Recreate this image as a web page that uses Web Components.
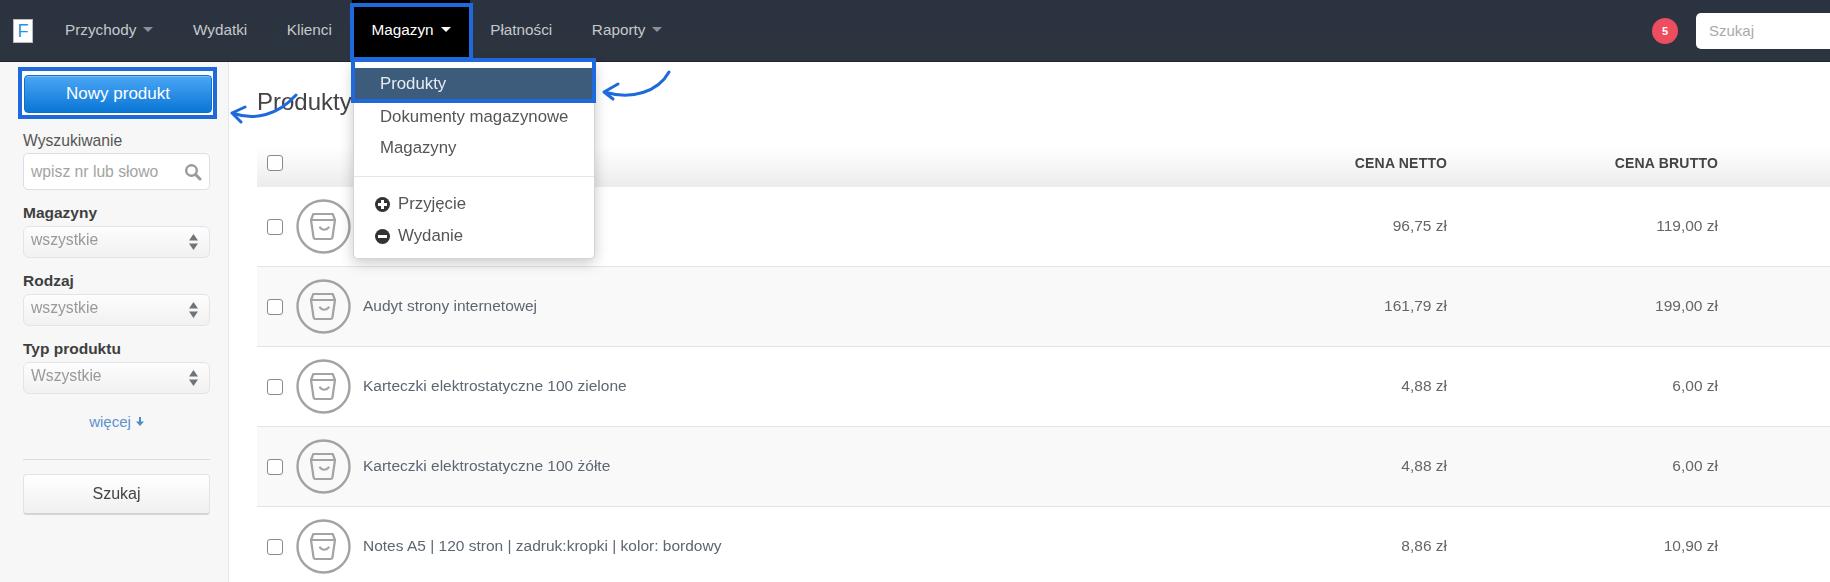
<!DOCTYPE html>
<html lang="pl"><head><meta charset="utf-8"><title>Produkty</title>
<style>
html,body{margin:0;height:582px;overflow:hidden;background:#fff;font:15.5px "Liberation Sans",Arial,sans-serif;color:#555}
app-shell{width:1830px;height:582px;filter:blur(.35px)}
</style></head><body>
<app-shell>
  <app-navbar slot="nav">
    <nav-item caret>Przychody</nav-item>
    <nav-item>Wydatki</nav-item>
    <nav-item>Klienci</nav-item>
    <nav-item caret active>Magazyn</nav-item>
    <nav-item>Płatności</nav-item>
    <nav-item caret>Raporty</nav-item>
  </app-navbar>
  <app-sidebar slot="side">
    <filter-select label="Magazyny" value="wszystkie"></filter-select>
    <filter-select label="Rodzaj" value="wszystkie"></filter-select>
    <filter-select label="Typ produktu" value="Wszystkie"></filter-select>
  </app-sidebar>
  <product-table slot="main">
    <product-row name="" net="96,75 zł" gross="119,00 zł"></product-row>
    <product-row alt name="Audyt strony internetowej" net="161,79 zł" gross="199,00 zł"></product-row>
    <product-row name="Karteczki elektrostatyczne 100 zielone" net="4,88 zł" gross="6,00 zł"></product-row>
    <product-row alt name="Karteczki elektrostatyczne 100 żółte" net="4,88 zł" gross="6,00 zł"></product-row>
    <product-row name="Notes A5 | 120 stron | zadruk:kropki | kolor: bordowy" net="8,86 zł" gross="10,90 zł"></product-row>
  </product-table>
  <dropdown-menu slot="over"></dropdown-menu>
  <call-outs slot="over"></call-outs>
</app-shell>
<script>
const def=(n,html)=>{customElements.define(n,class extends HTMLElement{
  connectedCallback(){ if(this.shadowRoot)return; const r=this.attachShadow({mode:'open'}); r.innerHTML=typeof html==='function'?html(this):html; }
});};
def('app-shell',`<style>
:host{display:grid;grid-template-columns:229px 1fr;grid-template-rows:62px 520px;position:relative;overflow:hidden}
.n{grid-column:1/3;display:block}
</style>
<div class="n"><slot name="nav"></slot></div>
<slot name="side"></slot><slot name="main"></slot><slot name="over"></slot>`);

def('app-navbar',`<style>
:host{display:flex;align-items:center;height:62px;background:linear-gradient(#2a333f,#2c3440);box-sizing:border-box;border-bottom:1px solid #1f262e;padding-left:13px}
.logo{width:20px;height:24px;background:#fff;border:1px solid #bbb;box-sizing:border-box;display:flex;align-items:center;justify-content:center;color:#2f8fd8;font-size:18px;line-height:1;margin-right:12.2px;flex:none}
.items{display:flex;height:100%}
.right{margin-left:auto;display:flex;align-items:center}
.badge{width:26px;height:26px;border-radius:50%;background:#ec4d5f;color:#fff;font-size:11px;font-weight:700;display:flex;align-items:center;justify-content:center;margin-right:18px}
.search{width:134px;height:36px;background:#fff;border-radius:5px 0 0 5px;box-sizing:border-box;padding:0 13px;display:flex;align-items:center;color:#a9a9a9;font-size:15px}
</style><div class="logo">F</div><div class="items"><slot></slot></div>
<div class="right"><div class="badge">5</div><div class="search">Szukaj</div></div>`);

def('nav-item',el=>`<style>
:host{display:flex;align-items:center;color:#c6c8cb;font-size:15.3px;padding:0 19.8px 2px;white-space:nowrap;height:61px;box-sizing:border-box}
:host([active]){background:#000;color:#fff}
.c{width:0;height:0;border:5px solid transparent;border-top:5px solid #8b9096;border-bottom:0;margin-left:7px}
:host([active]) .c{border-top-color:#fff}
</style><slot></slot>${el.hasAttribute('caret')?'<i class="c"></i>':''}`);

def('app-sidebar',`<style>
:host{display:block;background:#f7f7f8;border-right:1px solid #e4e8ec;box-sizing:border-box;padding:13px 18px 0 23px;height:520px}
.new{height:38px;box-sizing:border-box;margin:0 -2px 0 1px;border:1px solid #0f70c8;border-radius:4px;background:linear-gradient(#4ba6f5,#0a76d6);color:#fff;font-size:17px;display:flex;align-items:center;justify-content:center;box-shadow:inset 0 1px 0 #7cc0f8,0 0 0 3px #fff}
.lab{margin-top:20px;font-size:15.7px;color:#555;line-height:16px;height:20px}
.inp{height:37px;box-sizing:border-box;border:1px solid #dcdfe3;border-radius:5px;background:#fff;display:flex;align-items:center;justify-content:space-between;padding:0 7px;color:#a3a3a3;font-size:15.7px}
.more{display:flex;justify-content:center;align-items:center;gap:5px;color:#5b93cc;font-size:15px;margin-top:19px;height:16px}
hr{border:0;border-top:1px solid #dcdcdc;margin:30px 0 14px}
.go{height:41px;box-sizing:border-box;border:1px solid #e3e3e3;border-bottom:2px solid #d4d4d4;border-radius:4px;background:linear-gradient(#fff,#f0f0f0);display:flex;align-items:center;justify-content:center;color:#444;font-size:16px}
svg{display:block}
</style>
<div class="new">Nowy produkt</div>
<div class="lab">Wyszukiwanie</div>
<div class="inp"><span>wpisz nr lub słowo</span><svg width="18" height="18" viewBox="0 0 18 18" fill="none" stroke="#9a9a9a" stroke-width="2.4"><circle cx="7.5" cy="7.5" r="5.3"/><path d="M11.5 11.5 16 16" stroke-linecap="round" stroke-width="3"/></svg></div>
<slot></slot>
<div class="more"><span>więcej</span><svg width="8" height="9" viewBox="0 0 8 9"><path d="M3 0h2v4.5h3L4 9 0 4.5h3z" fill="#4f8bc9"/></svg></div>
<hr>
<div class="go">Szukaj</div>`);

def('filter-select',el=>`<style>
:host{display:block;margin-top:16px}
.l{font-weight:700;color:#3f3f3f;font-size:15.5px;line-height:14px;height:20px}
.s{height:32px;box-sizing:border-box;border:1px solid #dde6ee;border-radius:6px;background:linear-gradient(#fdfdfd,#f1f1f1);padding:0 7px;display:flex;align-items:center;justify-content:space-between;color:#999;font-size:15.7px}
span{position:relative;top:-2px}
svg{display:block;margin-right:4px}
</style><div class="l">${el.getAttribute('label')}</div>
<div class="s"><span>${el.getAttribute('value')}</span><svg width="9" height="16" viewBox="0 0 9 16" fill="#6f7478"><path d="M4.5 0 9 6.5H0zM0 9.5h9L4.5 16z"/></svg></div>`);

def('product-table',`<style>
:host{display:block;padding:25px 0 0 28px;overflow:hidden;height:520px;box-sizing:border-box}
h1{margin:0;font-weight:400;font-size:24px;line-height:30px;color:#444;height:60px}
.h{display:grid;grid-template-columns:1000px 190px 271px 1fr;height:40px;box-sizing:border-box;padding-bottom:8px;align-items:center;background:linear-gradient(#fff,#ececec);font-weight:700;font-size:14px;color:#444;letter-spacing:.2px}
.h>div{text-align:right}.h>div:first-child{text-align:left;padding-left:10px;display:flex}
.cb{width:16px;height:16px;box-sizing:border-box;border:1.5px solid #8a8a8a;border-radius:3px;background:#fff}
</style>
<h1>Produkty</h1>
<div class="h"><div><i class="cb"></i></div><div>CENA NETTO</div><div>CENA BRUTTO</div><div></div></div>
<slot></slot>`);

def('product-row',el=>`<style>
:host{display:grid;grid-template-columns:1000px 190px 271px 1fr;height:80px;align-items:center;background:#fff;border-bottom:1px solid #e4e4e4;box-sizing:border-box;color:#666;font-size:15.5px}
:host([alt]){background:#f9f9f9}
.a{display:flex;align-items:center;padding-left:10px}
.cb{width:16px;height:16px;box-sizing:border-box;border:1.5px solid #8a8a8a;border-radius:3px;background:#fff;flex:none;margin-right:13px}
svg{display:block;flex:none;margin-right:12px}
.n{color:#5d6673;position:relative;top:-1px}
.r{text-align:right;position:relative;top:-1px}
</style>
<div class="a"><i class="cb"></i><svg width="55" height="55" viewBox="0 0 55 55" fill="none" stroke="#a3a3a3"><circle cx="27.5" cy="27.5" r="26" stroke-width="2.4"/><path d="M15 21 17.3 15H36.7L39 21M15 21H39L36.5 38Q36.3 40 34.5 40H19.5Q17.7 40 17.5 38ZM24 28.5Q28 33 32.7 28.5" stroke-width="2.2" stroke-linejoin="round" stroke-linecap="round"/></svg><span class="n">${el.getAttribute('name')}</span></div>
<div class="r">${el.getAttribute('net')}</div><div class="r">${el.getAttribute('gross')}</div><div></div>`);

def('dropdown-menu',`<style>
:host{position:absolute;left:353px;top:62px;width:242px;height:197px;background:#fff;border:1px solid #d4d4d4;border-top:0;border-radius:0 0 5px 5px;box-sizing:border-box;box-shadow:0 4px 14px rgba(0,0,0,.22);font-size:16.8px;color:#555;padding-top:6px}
.i{height:31px;display:flex;align-items:center;padding-left:26px}
.i.on{background:#3d5c7c;color:#e8edf2;height:33px;padding-bottom:2px;box-sizing:border-box}
.d{border-top:1px solid #e5e5e5;margin:13px 0 11px}
.o{height:32px;display:flex;align-items:center;padding-left:21px;gap:8px}
svg{display:block;flex:none}
</style>
<div class="i on">Produkty</div><div class="i">Dokumenty magazynowe</div><div class="i">Magazyny</div>
<div class="d"></div>
<div class="o"><svg width="15" height="15" viewBox="0 0 15 15"><circle cx="7.5" cy="7.5" r="7.5" fill="#333"/><path d="M6 3h3v3h3v3H9v3H6V9H3V6h3z" fill="#fff"/></svg>Przyjęcie</div>
<div class="o"><svg width="15" height="15" viewBox="0 0 15 15"><circle cx="7.5" cy="7.5" r="7.5" fill="#333"/><path d="M3 6h9v3H3z" fill="#fff"/></svg>Wydanie</div>`);

def('call-outs',`<style>
:host{position:absolute;left:0;top:0;width:1830px;height:582px;pointer-events:none}
svg{position:absolute;left:0;top:0}
</style>
<svg width="1830" height="582" viewBox="0 0 1830 582" fill="none" stroke="#1e69dc">
<g stroke-width="4"><rect x="352" y="5" width="119" height="54"/><rect x="20" y="69" width="195" height="48"/><rect x="353" y="60" width="241" height="41"/></g>
<g stroke-width="3" stroke-linecap="round" stroke-linejoin="round">
<path d="M296 95C278 115 255 121 232 113M245 107 232 113 241 122"/>
<path d="M669 72C658 92 632 100 604 92M618 84 604 92 613 99"/></g></svg>`);
</script>
</body></html>
